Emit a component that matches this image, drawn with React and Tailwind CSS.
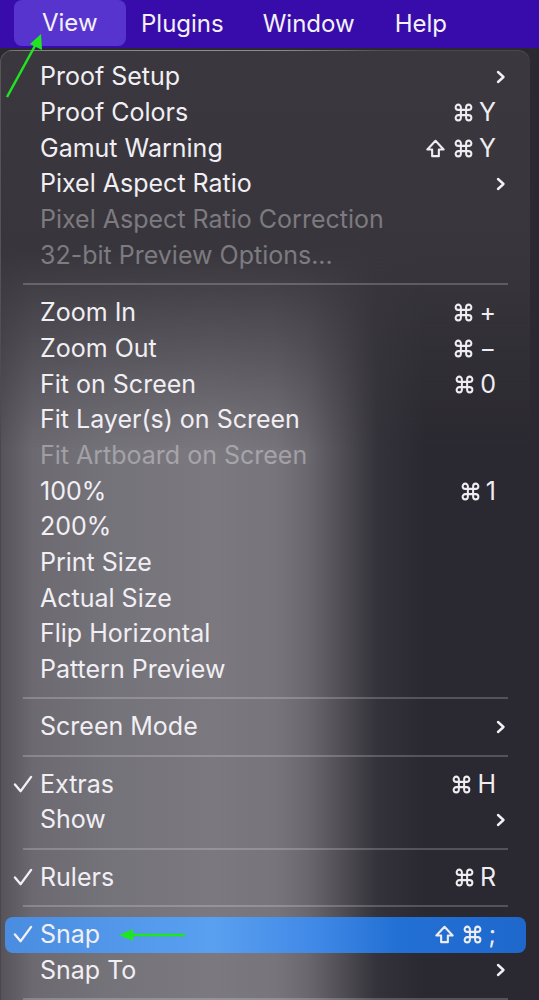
import React from "react";

const CMD = "cmd";
const SHIFT = "shift";

function CmdIcon() {
  return (
    <svg width="21" height="21" viewBox="0 0 24 24" className="block">
      <path
        d="M15 6v12a3 3 0 1 0 3-3H6a3 3 0 1 0 3 3V6a3 3 0 1 0-3 3h12a3 3 0 1 0-3-3"
        fill="none"
        stroke="#efedf1"
        strokeWidth="2.3"
        strokeLinecap="round"
        strokeLinejoin="round"
      />
    </svg>
  );
}

function ShiftIcon() {
  return (
    <svg width="23" height="23" viewBox="0 0 24 24" className="block">
      <path
        d="M8.5 20v-7H3.5L12 4l8.5 9h-5v7z"
        fill="none"
        stroke="#efedf1"
        strokeWidth="2.2"
        strokeLinejoin="round"
      />
    </svg>
  );
}

function Chevron() {
  return (
    <svg width="10" height="14" viewBox="0 0 10 14" className="block">
      <polyline points="2,2 7.5,7 2,12" fill="none" stroke="#f2f0f4" strokeWidth="2.4" strokeLinecap="round" strokeLinejoin="round" />
    </svg>
  );
}

function Check() {
  return (
    <svg width="21" height="19" viewBox="0 0 22 20" className="block">
      <polyline points="2,10 8,17 19,2" fill="none" stroke="#f2f0f4" strokeWidth="2.5" strokeLinecap="round" strokeLinejoin="round" />
    </svg>
  );
}

function Shortcut({ keys }) {
  return (
    <div className="flex items-center text-[25px] leading-none text-[#efedf1]">
      {keys.map((k, i) => {
        if (k === CMD)
          return (
            <span key={i} className="mr-[5px] block">
              <CmdIcon />
            </span>
          );
        if (k === SHIFT)
          return (
            <span key={i} className="mr-[6px] block">
              <ShiftIcon />
            </span>
          );
        return (
          <span key={i} className="leading-none">
            {k}
          </span>
        );
      })}
    </div>
  );
}

function Row({ label, disabled, checked, keys, sub, active }) {
  return (
    <div
      className={
        "relative mx-[4px] flex h-[35.7px] items-center " +
        (active
          ? "rounded-[8px] bg-[linear-gradient(to_right,#4a8de0_0%,#559bee_30%,#5aa0f0_40%,#3f88e6_60%,#2370d4_75%,#1e68cc_100%)]"
          : "")
      }
    >
      <div className="flex w-[35px] justify-center pl-[2px]">{checked ? <Check /> : null}</div>
      <span
        className={
          "flex-1 text-[25px] leading-none " +
          (disabled ? "text-white/35" : "text-[#f1eff3]")
        }
      >
        {label}
      </span>
      {keys ? (
        <div className="pr-[30px]">
          <Shortcut keys={keys} />
        </div>
      ) : null}
      {sub ? (
        <div className="pr-[20px]">
          <Chevron />
        </div>
      ) : null}
      {active ? (
        <svg className="absolute left-[112px] top-[10px]" width="72" height="16" viewBox="0 0 72 16">
          <line x1="12" y1="8" x2="68" y2="8" stroke="#1fe61f" strokeWidth="2.5" />
          <polygon points="2,8 16,2 16,14" fill="#1fe61f" />
        </svg>
      ) : null}
    </div>
  );
}

function Sep() {
  return (
    <div className="flex h-[21.7px] items-center px-[22px]">
      <div className="h-[2px] w-full bg-white/20" />
    </div>
  );
}

export default function App() {
  return (
    <div className="relative h-[1000px] w-[539px] overflow-hidden bg-[#2a2830] font-['Inter','Liberation_Sans',sans-serif]">
      {/* menu bar */}
      <div className="flex h-[48px] items-center bg-[#380cab] text-[24px] text-[#f3f1f8]">
        <div className="ml-[14px] flex h-[46px] w-[112px] items-center self-start rounded-[8px] bg-[#5834cf] pl-[28px]">
          View
        </div>
        <div className="ml-[15px]">Plugins</div>
        <div className="ml-[39px]">Window</div>
        <div className="ml-[40px]">Help</div>
      </div>

      {/* menu */}
      <div className="mt-[2px] w-[530px] rounded-t-[12px] border-t border-l border-white/15 bg-[linear-gradient(to_bottom,#3a383e_0px,#38363c_200px,rgba(56,54,60,0)_400px),linear-gradient(to_right,#56545a_0%,#6c6a70_6%,#75737a_20%,#7b797f_40%,#77757b_52%,#6a686e_58%,#4e4c52_65%,#34323a_71%,#2a2830_80%,#2a2830_100%)] pt-[8px]">
        <Row label="Proof Setup" sub />
        <Row label="Proof Colors" keys={[CMD, "Y"]} />
        <Row label="Gamut Warning" keys={[SHIFT, CMD, "Y"]} />
        <Row label="Pixel Aspect Ratio" sub />
        <Row label="Pixel Aspect Ratio Correction" disabled />
        <Row label="32-bit Preview Options..." disabled />
        <Sep />
        <Row label="Zoom In" keys={[CMD, "+"]} />
        <Row label="Zoom Out" keys={[CMD, "\u2212"]} />
        <Row label="Fit on Screen" keys={[CMD, "0"]} />
        <Row label="Fit Layer(s) on Screen" />
        <Row label="Fit Artboard on Screen" disabled />
        <Row label="100%" keys={[CMD, "1"]} />
        <Row label="200%" />
        <Row label="Print Size" />
        <Row label="Actual Size" />
        <Row label="Flip Horizontal" />
        <Row label="Pattern Preview" />
        <Sep />
        <Row label="Screen Mode" sub />
        <Sep />
        <Row label="Extras" checked keys={[CMD, "H"]} />
        <Row label="Show" sub />
        <Sep />
        <Row label="Rulers" checked keys={[CMD, "R"]} />
        <Sep />
        <Row label="Snap" checked active keys={[SHIFT, CMD, ";"]} />
        <Row label="Snap To" sub />
        <Sep />
      </div>

      {/* green arrow pointing to View */}
      <svg className="absolute left-0 top-0" width="60" height="110" viewBox="0 0 60 110">
        <line x1="7" y1="97" x2="36" y2="44" stroke="#1fe61f" strokeWidth="2.5" />
        <polygon points="41,34 30,44 42,50" fill="#1fe61f" />
      </svg>
    </div>
  );
}
